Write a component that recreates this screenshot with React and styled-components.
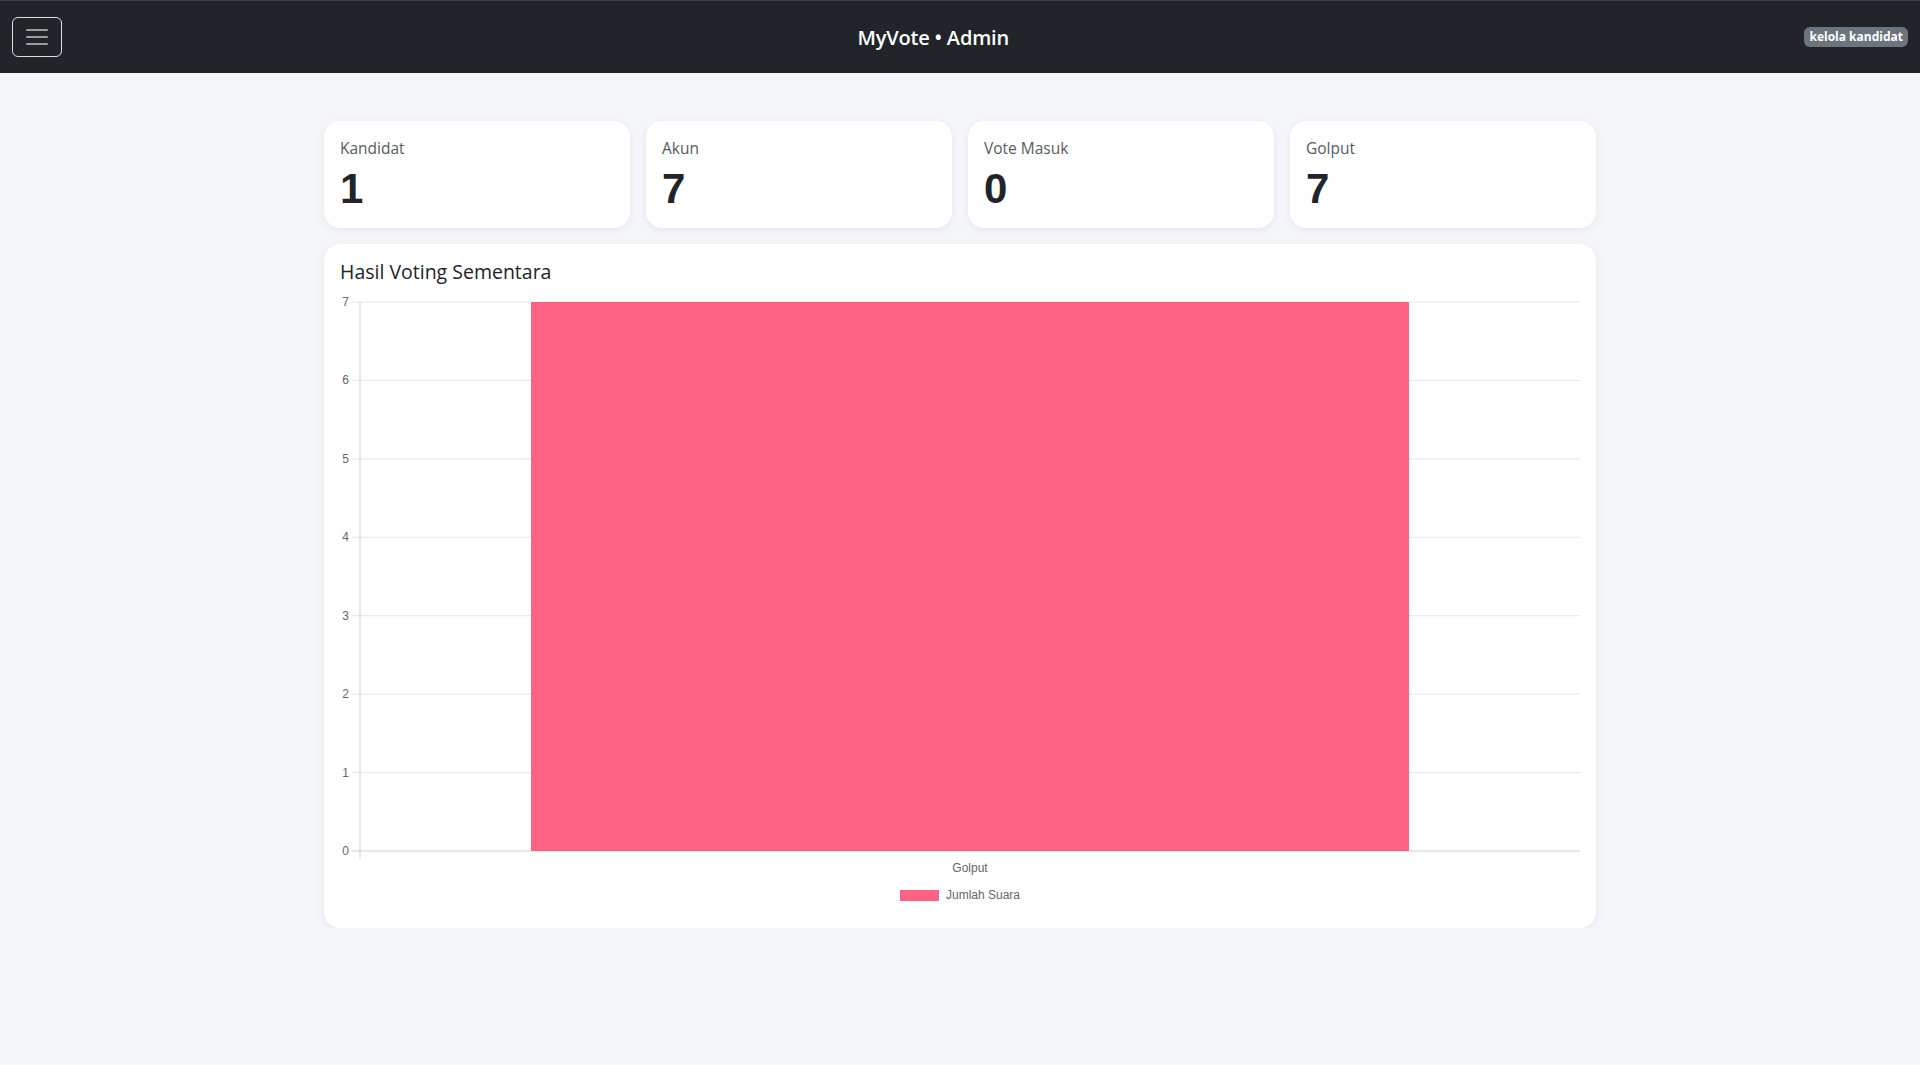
import React from 'react'
import styled, { createGlobalStyle } from 'styled-components'

const GlobalStyle = createGlobalStyle`
  body {
    margin: 0;
    background: #f5f6fa;
    font-family: "Open Sans", "Liberation Sans", sans-serif;
    color: #212529;
  }
`

const Navbar = styled.nav`
  height: 72px;
  border-top: 1px solid #3c3f43;
  background: #212529;
  display: flex;
  justify-content: space-between;
  align-items: center;
  padding: 0 12px;
`

const Toggler = styled.button`
  width: 50px;
  height: 40px;
  border: 1px solid rgba(255, 255, 255, 0.85);
  border-radius: 6px;
  background: transparent;
  display: flex;
  align-items: center;
  justify-content: center;
  padding: 0;
`

const Brand = styled.div`
  color: #fff;
  font-size: 20px;
  font-weight: 600;
  letter-spacing: -0.2px;
`

const Badge = styled.span`
  background: #6c757d;
  color: #fff;
  font-size: 12px;
  font-weight: 700;
  line-height: 20px;
  padding: 0 5px;
  border-radius: 6px;
`

const Main = styled.main`
  max-width: 1272px;
  margin: 0 auto;
  padding-top: 48px;
  display: flex;
  flex-direction: column;
  gap: 16px;
`

const StatRow = styled.div`
  display: grid;
  grid-template-columns: repeat(4, 1fr);
  gap: 16px;
`

const Card = styled.div`
  background: #fff;
  border-radius: 16px;
  box-shadow: 0 2px 8px rgba(20, 30, 60, 0.07);
  padding: 16px;
`

const StatLabel = styled.div`
  font-size: 15.5px;
  line-height: 22px;
  font-weight: 500;
  color: #555b61;
`

const StatValue = styled.div`
  font-family: "Liberation Sans", Arial, sans-serif;
  font-weight: 700;
  font-size: 42px;
  line-height: 1.1;
  margin-top: 7px;
`

const ChartTitle = styled.h5`
  margin: 0 0 12px;
  font-size: 19.5px;
  font-weight: 500;
  line-height: 24px;
  color: #212529;
`

const ChartSvg = styled.svg`
  display: block;
  width: 100%;
  height: 616px;
  overflow: visible;
  font-family: "Liberation Sans", Arial, sans-serif;
`

const stats = [
  { label: 'Kandidat', value: 1 },
  { label: 'Akun', value: 7 },
  { label: 'Vote Masuk', value: 0 },
  { label: 'Golput', value: 7 },
]

const PINK = '#ff6384'

const BarChart = () => {
  const top = 6
  const bottom = 555
  const axisX = 20
  const right = 1240
  const step = (bottom - top) / 7
  const ticks = [0, 1, 2, 3, 4, 5, 6, 7]
  return (
    <ChartSvg viewBox="0 0 1240 616">
      {ticks.map((t) => {
        const y = bottom - t * step
        return (
          <g key={t}>
            <line x1={12} x2={right} y1={y} y2={y} stroke={t === 0 ? '#cfcfcf' : '#e6e6e6'} strokeWidth="1" />
            <text x={9} y={y + 4} fontSize="12" fill="#666" textAnchor="end">
              {t}
            </text>
          </g>
        )
      })}
      <rect x={191} y={top} width={878} height={bottom - top} fill={PINK} />
      <line x1={axisX} x2={axisX} y1={top} y2={bottom + 8} stroke="#cfcfcf" strokeWidth="1" />
      <text x={630} y={576} fontSize="12" fill="#666" textAnchor="middle">
        Golput
      </text>
      <rect x={559.5} y={593.5} width={40} height={12} fill={PINK} stroke="#fff" strokeWidth="1" />
      <text x={606} y={603} fontSize="12" fill="#666">
        Jumlah Suara
      </text>
    </ChartSvg>
  )
}

const App = () => {
  return (
    <>
      <GlobalStyle />
      <Navbar>
        <Toggler aria-label="menu">
          <svg width="30" height="30" viewBox="0 0 30 30">
            <path d="M5 8h20M5 15h20M5 22h20" stroke="rgba(255,255,255,0.55)" strokeWidth="2" strokeLinecap="round" />
          </svg>
        </Toggler>
        <Brand>MyVote • Admin</Brand>
        <Badge>kelola kandidat</Badge>
      </Navbar>
      <Main>
        <StatRow>
          {stats.map((s) => (
            <Card key={s.label}>
              <StatLabel>{s.label}</StatLabel>
              <StatValue>{s.value}</StatValue>
            </Card>
          ))}
        </StatRow>
        <Card>
          <ChartTitle>Hasil Voting Sementara</ChartTitle>
          <BarChart />
        </Card>
      </Main>
    </>
  )
}

export default App
